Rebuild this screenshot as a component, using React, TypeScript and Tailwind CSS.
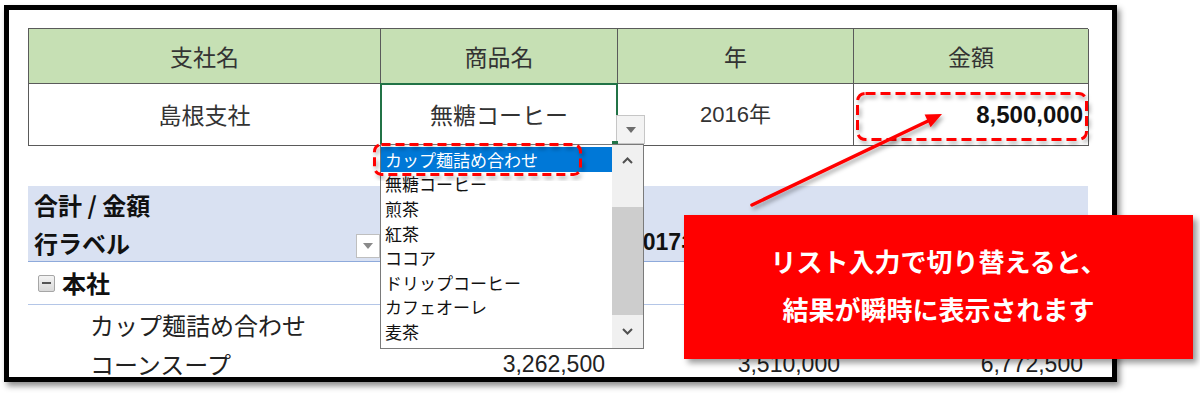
import React from "react";

const JP = { fontFamily: '"Noto Sans CJK JP", sans-serif' };
const NUM = { fontFamily: '"Liberation Sans", "Noto Sans CJK JP", sans-serif' };

function Tri({ color = "#6d6d6d" }: { color?: string }) {
  return (
    <svg width="10" height="6" viewBox="0 0 10 6">
      <polygon points="0,0 10,0 5,6" fill={color} />
    </svg>
  );
}

function Chevron({ up }: { up?: boolean }) {
  return (
    <svg width="11" height="7" viewBox="0 0 11 7">
      <polyline
        points={up ? "1,6 5.5,1.5 10,6" : "1,1 5.5,5.5 10,1"}
        fill="none"
        stroke="#505050"
        strokeWidth="2"
      />
    </svg>
  );
}

export default function App() {
  const items = [
    "カップ麺詰め合わせ",
    "無糖コーヒー",
    "煎茶",
    "紅茶",
    "ココア",
    "ドリップコーヒー",
    "カフェオーレ",
    "麦茶",
  ];
  return (
    <div className="relative w-[1200px] h-[393px] bg-white overflow-hidden" style={JP}>
      {/* framed sheet */}
      <div className="ml-[4px] mt-[5px] w-[1113px] h-[377px] border-[5px] border-black bg-white overflow-hidden shadow-[3px_4px_6px_rgba(0,0,0,0.45)]">
        <div className="pl-[19px] pt-[18px]">
          {/* input table */}
          <div className="w-[1060px] grid grid-cols-[352px_237px_236px_235px] border-l border-t border-[#5a5a5a] text-[23px] text-[#333]">
            {["支社名", "商品名", "年", "金額"].map((h) => (
              <div key={h} className="h-[55px] bg-[#c6e0b4] border-r border-b border-[#5a5a5a] flex items-center justify-center">
                {h}
              </div>
            ))}
            <div className="h-[62px] border-r border-b border-[#5a5a5a] flex items-center justify-center">島根支社</div>
            <div className="h-[62px] border-r border-b border-[#5a5a5a] relative flex items-center justify-center">
              <div className="absolute inset-[-1px] border-2 border-[#217346]" />
              <span>無糖コーヒー</span>
            </div>
            <div className="h-[62px] border-r border-b border-[#5a5a5a] flex items-center justify-center text-[22px]" style={NUM}>
              2016年
            </div>
            <div className="h-[62px] border-r border-b border-[#5a5a5a] flex items-center justify-end pr-[5px] font-bold text-[24px] text-[#111]" style={NUM}>
              8,500,000
            </div>
          </div>

          {/* pivot table */}
          <div className="mt-[40px] w-[1060px] text-[24px] text-[#222]">
            <div className="bg-[#d9e1f2] border-b border-[#8eaadb]">
              <div className="h-[38px] flex items-center pl-[6px] font-bold text-[#111]">合計 / 金額</div>
              <div className="h-[37px] grid grid-cols-[352px_230px_235px_243px] items-center font-bold text-[#111]">
                <div className="flex items-center justify-between pl-[6px]">
                  <span>行ラベル</span>
                  <div className="w-[24px] h-[24px] mt-[6px] bg-white border border-[#bfbfbf] flex items-center justify-center">
                    <Tri color="#8a8a8a" />
                  </div>
                </div>
                <div />
                <div className="pl-[20px] text-[23px]" style={NUM}>2017年</div>
                <div />
              </div>
            </div>
            <div className="h-[43px] border-b border-[#b4c6e7] flex items-center pl-[10px] gap-[7px] font-bold text-[#111]">
              <div className="w-[17px] h-[17px] border border-[#a6a6a6] rounded-[2px] bg-gradient-to-b from-[#f4f4f4] to-[#d9d9d9] flex items-center justify-center">
                <div className="w-[9px] h-[2px] bg-[#555]" />
              </div>
              <span>本社</span>
            </div>
            <div className="h-[40px] flex items-center">
              <div className="pl-[62px]">カップ麺詰め合わせ</div>
            </div>
            <div className="h-[38px] grid grid-cols-[352px_230px_235px_243px] items-center">
              <div className="pl-[62px]">コーンスープ</div>
              <div className="text-right pr-[5px] text-[23px]" style={NUM}>3,262,500</div>
              <div className="text-right pr-[5px] text-[23px]" style={NUM}>3,510,000</div>
              <div className="text-right pr-[5px] text-[23px]" style={NUM}>6,772,500</div>
            </div>
          </div>
        </div>
      </div>

      {/* dropdown button of selected cell */}
      <div className="absolute left-[616px] top-[115px] w-[29px] h-[29px] bg-[#f3f3f3] border border-[#c6c6c6] flex items-center justify-center">
        <Tri />
      </div>
      <div className="absolute left-[612px] top-[141px] w-[6px] h-[4px] bg-[#217346]" />

      {/* dropdown list */}
      <div className="absolute left-[380px] top-[144px] w-[264px] h-[205px] bg-white border border-[#7a7a7a] flex">
        <div className="w-[231px] pt-[2px]">
          {items.map((it, i) => (
            <div
              key={it}
              className={
                "h-[24.6px] flex items-center pl-[4px] text-[17px] leading-none " +
                (i === 0 ? "bg-[#0078d7] text-white" : "text-[#111]")
              }
            >
              {it}
            </div>
          ))}
        </div>
        <div className="w-[31px] bg-[#f0f0f0] flex flex-col">
          <div className="h-[30px] flex items-center justify-center">
            <Chevron up />
          </div>
          <div className="h-[32px]" />
          <div className="h-[108px] bg-[#cdcdcd]" />
          <div className="flex-1 flex items-center justify-center">
            <Chevron />
          </div>
        </div>
      </div>

      {/* annotations */}
      <svg className="absolute left-0 top-0" width="1200" height="393" viewBox="0 0 1200 393">
        <defs>
          <filter id="sh" x="-20%" y="-20%" width="140%" height="140%">
            <feDropShadow dx="2" dy="3" stdDeviation="2" floodColor="#000" floodOpacity="0.35" />
          </filter>
        </defs>
        <rect x="374.5" y="144.5" width="206" height="30" rx="7" fill="none" stroke="#ff0000" strokeWidth="3" strokeDasharray="9 5" filter="url(#sh)" />
        <rect x="857.5" y="93.5" width="229" height="46" rx="8" fill="none" stroke="#ff0000" strokeWidth="3" strokeDasharray="10 5" filter="url(#sh)" />
        <g filter="url(#sh)">
          <line x1="752" y1="205" x2="928" y2="121" stroke="#ff0000" strokeWidth="3.5" strokeLinecap="round" />
          <polygon points="942,114 930.6,127.2 924.6,114.6" fill="#ff0000" />
        </g>
      </svg>

      {/* callout */}
      <div className="absolute left-[684px] top-[215px] w-[509px] h-[144px] bg-[#ff0000] shadow-[4px_4px_6px_rgba(0,0,0,0.4)] flex flex-col items-center justify-center text-white font-bold text-[26px] leading-[48px] pb-[4px]">
        <div>リスト入力で切り替えると、</div>
        <div>結果が瞬時に表示されます</div>
      </div>
    </div>
  );
}
